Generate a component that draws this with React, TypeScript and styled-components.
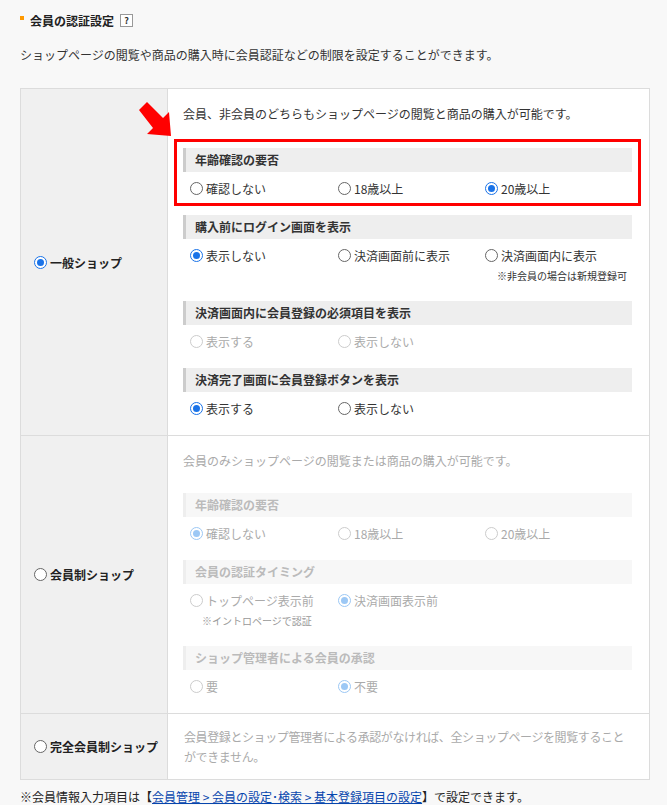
import styled, { createGlobalStyle } from "styled-components";

const Global = createGlobalStyle`
  body {
    margin: 0;
    background: #f8f8f8;
    font-family: "Noto Sans CJK JP", "Noto Sans", sans-serif;
    font-size: 12px;
    color: #333;
  }
`;

type Opt = { label: string; checked?: boolean; note?: string };
type Block = { title: string; options: Opt[] };

const shopBlocks: Block[] = [
  { title: "年齢確認の要否", options: [{ label: "確認しない" }, { label: "18歳以上" }, { label: "20歳以上", checked: true }] },
  {
    title: "購入前にログイン画面を表示",
    options: [{ label: "表示しない", checked: true }, { label: "決済画面前に表示" }, { label: "決済画面内に表示", note: "※非会員の場合は新規登録可" }],
  },
  { title: "決済画面内に会員登録の必須項目を表示", options: [{ label: "表示する" }, { label: "表示しない" }] },
  { title: "決済完了画面に会員登録ボタンを表示", options: [{ label: "表示する", checked: true }, { label: "表示しない" }] },
];

const memberBlocks: Block[] = [
  { title: "年齢確認の要否", options: [{ label: "確認しない", checked: true }, { label: "18歳以上" }, { label: "20歳以上" }] },
  { title: "会員の認証タイミング", options: [{ label: "トップページ表示前", note: "※イントロページで認証" }, { label: "決済画面表示前", checked: true }] },
  { title: "ショップ管理者による会員の承認", options: [{ label: "要" }, { label: "不要", checked: true }] },
];

function Radio({ checked, muted }: { checked?: boolean; muted?: boolean }) {
  return <Circle checked={checked} muted={muted} />;
}

function Blocks({ blocks, muted, highlightFirst, dimIndex }: { blocks: Block[]; muted?: boolean; highlightFirst?: boolean; dimIndex?: number }) {
  return (
    <>
      {blocks.map((b, i) => {
        const m = muted || i === dimIndex;
        return (
          <Section key={b.title} highlight={highlightFirst && i === 0}>
            <Heading muted={muted}>{b.title}</Heading>
            <Options>
              {b.options.map((o) => (
                <Option key={o.label}>
                  <OptLabel muted={m}>
                    <Radio checked={o.checked} muted={m} />
                    {o.label}
                  </OptLabel>
                  {o.note && <Note muted={muted}>{o.note}</Note>}
                </Option>
              ))}
            </Options>
          </Section>
        );
      })}
    </>
  );
}

export default function App() {
  return (
    <Page>
      <Global />
      <Title>
        <Square />
        会員の認証設定
        <Help>?</Help>
      </Title>
      <Lead>ショップページの閲覧や商品の購入時に会員認証などの制限を設定することができます。</Lead>
      <Table>
        <Row>
          <Head>
            <Radio checked />
            一般ショップ
          </Head>
          <Cell>
            <Arrow viewBox="0 0 40 40">
              <polygon points="2,10 10,2 26,18 32,12 34,36 10,34 16,28" fill="#f00" />
            </Arrow>
            <Desc>会員、非会員のどちらもショップページの閲覧と商品の購入が可能です。</Desc>
            <Blocks blocks={shopBlocks} highlightFirst dimIndex={2} />
          </Cell>
        </Row>
        <Row>
          <Head>
            <Radio />
            会員制ショップ
          </Head>
          <Cell>
            <Desc muted gap={22}>会員のみショップページの閲覧または商品の購入が可能です。</Desc>
            <Blocks blocks={memberBlocks} muted />
          </Cell>
        </Row>
        <Row>
          <Head>
            <Radio />
            完全会員制ショップ
          </Head>
          <Cell short>
            <Desc muted tight gap={0}>会員登録とショップ管理者による承認がなければ、全ショップページを閲覧することができません。</Desc>
          </Cell>
        </Row>
      </Table>
      <Foot>
        ※会員情報入力項目は【<a href="#">会員管理 &gt; 会員の設定･検索 &gt; 基本登録項目の設定</a>】で設定できます。
      </Foot>
    </Page>
  );
}

const Page = styled.div`
  padding: 10px 17px 14px 20px;
`;

const Title = styled.h2`
  display: flex;
  align-items: center;
  margin: 0;
  font-size: 12px;
  font-weight: bold;
  color: #222;
  height: 20px;
`;

const Square = styled.span`
  width: 4px;
  height: 4px;
  background: #f90;
  margin-right: 6px;
  margin-top: -5px;
`;

const Help = styled.span`
  display: inline-flex;
  align-items: center;
  justify-content: center;
  width: 11px;
  height: 11px;
  border: 1px solid #999;
  font-size: 9px;
  margin-left: 6px;
  background: #fff;
  color: #333;
`;

const Lead = styled.p`
  margin: 16px 0 0 0;
  color: #333;
`;

const Table = styled.div`
  margin-top: 25px;
  border: 1px solid #dcdcdc;
  background: #fff;
`;

const Row = styled.div`
  display: grid;
  grid-template-columns: 147px 1fr;
  & + & {
    border-top: 1px solid #dcdcdc;
  }
`;

const Head = styled.div`
  background: #f0f0f0;
  border-right: 1px solid #dcdcdc;
  display: flex;
  align-items: center;
  gap: 3px;
  padding-left: 13px;
  font-weight: bold;
  color: #222;
`;

const Cell = styled.div<{ short?: boolean }>`
  position: relative;
  padding: ${({ short }) => (short ? "13px 17px 12px 16px" : "15px 17px 18px 15px")};
`;

const Arrow = styled.svg`
  position: absolute;
  left: -31px;
  top: 11px;
  width: 40px;
  height: 40px;
`;

const Desc = styled.p<{ muted?: boolean; gap?: number; tight?: boolean }>`
  margin: 0 0 ${({ gap }) => (gap ?? 13)}px 0;
  line-height: 20px;
  letter-spacing: ${({ tight }) => (tight ? "-0.4px" : "0")};
  color: ${({ muted }) => (muted ? "#aaa" : "#333")};
`;

const Section = styled.div<{ highlight?: boolean }>`
  margin-bottom: 18px;
  &:last-child {
    margin-bottom: 0;
  }
  ${({ highlight }) =>
    highlight &&
    `
    outline: 3px solid #f00;
    outline-offset: 6px;
    margin-top: 24px;
  `}
`;

const Heading = styled.div<{ muted?: boolean }>`
  height: 24px;
  line-height: 24px;
  padding-left: 9px;
  font-weight: bold;
  background: ${({ muted }) => (muted ? "#f7f7f7" : "#eee")};
  border-left: 3px solid ${({ muted }) => (muted ? "#eee" : "#ccc")};
  color: ${({ muted }) => (muted ? "#bbb" : "#333")};
`;

const Options = styled.div`
  display: grid;
  grid-template-columns: 148px 147px 1fr;
  margin-top: 7px;
  padding-left: 7px;
`;

const Option = styled.div`
  display: flex;
  flex-direction: column;
`;

const OptLabel = styled.label<{ muted?: boolean }>`
  display: flex;
  align-items: center;
  gap: 3px;
  height: 18px;
  color: ${({ muted }) => (muted ? "#aaa" : "#333")};
`;

const Note = styled.span<{ muted?: boolean }>`
  font-size: 10px;
  margin: 4px 0 0 12px;
  color: ${({ muted }) => (muted ? "#999" : "#333")};
`;

const Circle = styled.span<{ checked?: boolean; muted?: boolean }>`
  box-sizing: border-box;
  display: inline-block;
  flex: none;
  width: 13px;
  height: 13px;
  border-radius: 50%;
  background: #fff;
  border: 1px solid
    ${({ checked, muted }) => (checked ? (muted ? "#9cc8f5" : "#1a73e8") : muted ? "#ccc" : "#666")};
  position: relative;
  &::after {
    content: "";
    display: ${({ checked }) => (checked ? "block" : "none")};
    position: absolute;
    inset: 2px;
    border-radius: 50%;
    background: ${({ muted }) => (muted ? "#9cc8f5" : "#1a73e8")};
  }
`;

const Foot = styled.p`
  margin: 8px 0 0 0;
  color: #222;
  a {
    color: #0645ad;
  }
`;
